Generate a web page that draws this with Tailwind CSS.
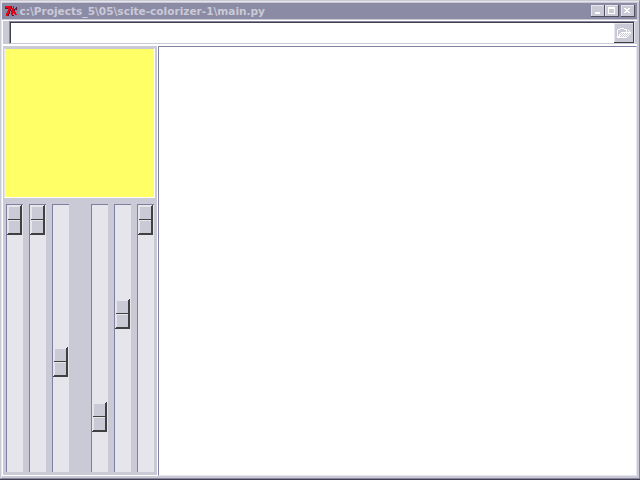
<!DOCTYPE html>
<html lang="en"><head><meta charset="utf-8"><title>main.py</title>
<script src="https://cdn.jsdelivr.net/npm/@tailwindcss/browser@4"></script></head>
<body class="w-[640px] h-[480px] overflow-hidden bg-[#cacad6]">
<main class="w-[640px] h-[480px] flex flex-col border-b border-[#424050]">
<div class="flex-1 flex flex-col min-h-0 border border-t-[#cacad6] border-l-[#cacad6] border-r-[#8684a0] border-b-[#8684a0]">
<div class="flex-1 flex flex-col min-h-0 border-t border-l border-[#e5e5eb] pt-px pr-[2px] pb-[2px]">
<header class="h-4 shrink-0 bg-[#8c8ba6] flex items-center pl-[2px] pr-[2px]">
<svg class="w-[14px] h-3 shrink-0" viewBox="0 0 14 12" shape-rendering="crispEdges"><path fill="#5b1830" d="M1 3h4v1H1zM7 1h1v3H7zM6 4h1v2H6zM5 6h1v3H5zM4 9h1v2H4zM12 2h1v3h-1zM10 4h1v5h-1zM8 10h2v1H8zM11 9h2v1h-2z"/><path fill="#e80014" d="M1 1h6v3H6v2H5v3H4v2H2V8h1V6h1V3H1zM9 1h1v5h1V3h1v2h-1v2h1v2h1v1h-2V9h-1V8H9v2H7V5h1V3h1z"/></svg>
<svg class="w-[250px] h-4 ml-[1px] shrink-0" viewBox="0 0 250 16"><text x="0.5" y="12" textLength="245.5" lengthAdjust="spacingAndGlyphs" fill="#cacad6" font-family="DejaVu Sans,sans-serif" font-weight="bold" font-size="10.5">c:\Projects_5\05\scite-colorizer-1\main.py</text></svg>
<div class="ml-auto flex">
<svg class="w-[14px] h-3" viewBox="0 0 14 12" shape-rendering="crispEdges"><path fill="#505060" d="M0 0h14v12H0z"/><path fill="#e5e5eb" d="M0 0h13v11H0z"/><path fill="#cacad6" d="M1 1h12v10H1z"/><path fill="#fff" d="M4 7h5v2H4z"/></svg>
<svg class="w-[14px] h-3" viewBox="0 0 14 12" shape-rendering="crispEdges"><path fill="#505060" d="M0 0h14v12H0z"/><path fill="#e5e5eb" d="M0 0h13v11H0z"/><path fill="#cacad6" d="M1 1h12v10H1z"/><path fill="#fff" fill-rule="evenodd" d="M3 2h7v7H3zm1 2v4h5V4z"/></svg>
<svg class="w-[14px] h-3 ml-[2px]" viewBox="0 0 14 12" shape-rendering="crispEdges"><path fill="#505060" d="M0 0h14v12H0z"/><path fill="#e5e5eb" d="M0 0h13v11H0z"/><path fill="#cacad6" d="M1 1h12v10H1z"/><path fill="#fff" d="M3 3h2v1h2V3h2v1H8v1H7v1h1v1h1v1H7V7H5v1H3V7h1V6h1V5H4V4H3z"/></svg>
</div></header>
<section class="h-[26px] shrink-0 mt-px border-b-2 border-l border-white pl-[6px] pr-[2px] pt-px flex relative">
<div class="absolute left-0 right-0 top-0 h-px bg-white"></div>
<div class="flex-1 h-[23px] border border-t-[#8684a0] border-l-[#8684a0] border-r-[#e5e5eb] border-b-[#cacad6]">
<div class="h-[21px] border-t border-l border-[#40404a] bg-white flex justify-end">
<svg class="w-5 h-5 shrink-0" viewBox="0 0 20 20" shape-rendering="crispEdges"><path fill="#404044" d="M0 0h20v20H0z"/><path fill="#e5e5eb" d="M0 0h19v19H0z"/><path fill="#cacad6" d="M1 1h18v18H1z"/><g fill="none" stroke="#fff"><path d="M3.500 14v-7M4 6.500h2M6 5.500h4M10 6.500h3M12.500 7v2M7 9.500h10M6.500 10v1M5.500 11v2M4.500 13v1M3 14.500h10M13.500 13v1M14.500 12v1M15.500 11v1M16.500 10v1M14 7.500h1M15 8.500h1"/><path stroke-dasharray="1 1" d="M8 10.500h8M7 11.500h8M6 12.500h8M5 13.500h8"/></g></svg>
</div></div></section>
<section class="flex-1 flex min-h-0 bg-[#cacad6]">
<div class="w-[156px] border-l border-r border-b border-white flex flex-col">
<div class="h-[150px] ml-[1px] mr-[2px] mt-[2px] border border-white bg-[#ffff66] border-t-[#cacad6] border-l-[#e5e5eb]"></div>
<div id="sliders" class="mt-[6px] ml-[3px] flex"></div>
</div>
<div class="flex-1 border border-t-[#8080a0] border-l-[#8080a0] border-r-[#e5e5eb] border-b-[#e5e5eb] bg-white"></div>
</section>
</div></div></main>
<script>
const values=[[0,0],[0,6],[142,6],[197,22],[94,6],[0,6]];
document.getElementById('sliders').innerHTML=values.map(([y,g])=>`<div class="w-[17px] h-[268px] shrink-0 border-l border-t border-[#7f7f9f] bg-[#e5e5eb]" style="margin-left:${g}px"><div class="w-[15px] h-[30px]" style="transform:translateY(${y}px)"><svg class="block w-[15px] h-[30px]" viewBox="0 0 15 30" shape-rendering="crispEdges"><path fill="#404040" d="M14 0h1v30H0v-1h1v-1h12V1h1z"/><path fill="#cacad6" d="M2 2h11v12H2zM2 16h11v12H2z"/><path fill="#404040" d="M1 14h12v1H1z"/></svg></div></div>`).join('');
</script></body></html>
